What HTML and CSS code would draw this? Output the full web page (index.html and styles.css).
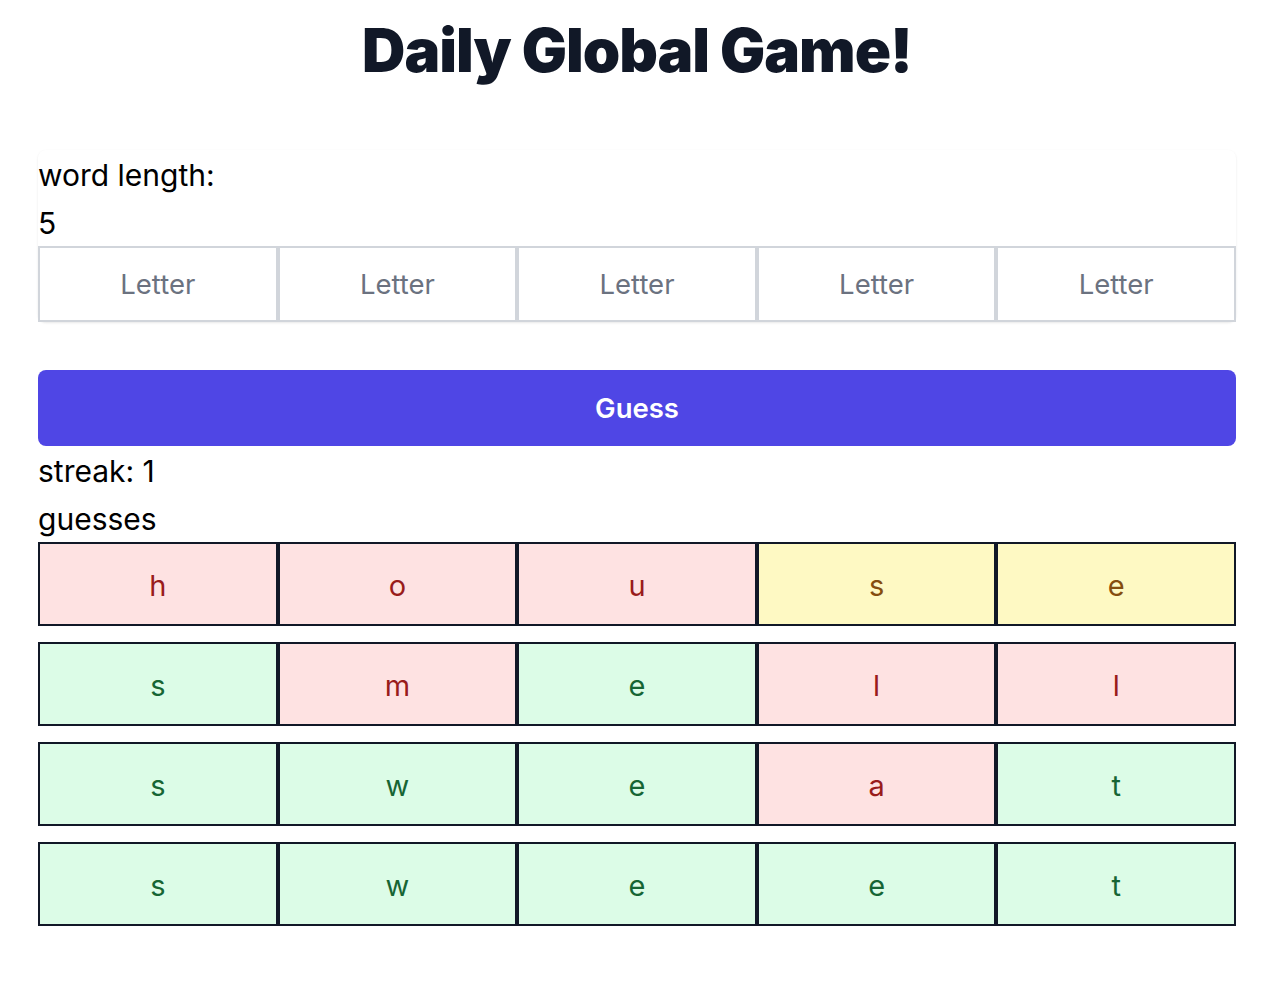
FILE: index.html
```html
<!DOCTYPE html>
<html lang="en">
<head>
<meta charset="utf-8">
<title>Daily Global Game!</title>
<link rel="stylesheet" href="styles.css">
</head>
<body>
<main class="page">
  <h1 class="title">Daily Global Game!</h1>
  <section class="card">
    <div class="line">word length:</div>
    <div class="line">5</div>
    <div class="letters">
      <input class="letter" type="text" placeholder="Letter">
      <input class="letter" type="text" placeholder="Letter">
      <input class="letter" type="text" placeholder="Letter">
      <input class="letter" type="text" placeholder="Letter">
      <input class="letter" type="text" placeholder="Letter">
    </div>
  </section>
  <button class="guess-btn" type="button">Guess</button>
  <div class="line">streak: 1</div>
  <div class="line">guesses</div>
  <div class="guesses">
    <div class="row">
      <div class="tile miss">h</div>
      <div class="tile miss">o</div>
      <div class="tile miss">u</div>
      <div class="tile near">s</div>
      <div class="tile near">e</div>
    </div>
    <div class="row">
      <div class="tile hit">s</div>
      <div class="tile miss">m</div>
      <div class="tile hit">e</div>
      <div class="tile miss">l</div>
      <div class="tile miss">l</div>
    </div>
    <div class="row">
      <div class="tile hit">s</div>
      <div class="tile hit">w</div>
      <div class="tile hit">e</div>
      <div class="tile miss">a</div>
      <div class="tile hit">t</div>
    </div>
    <div class="row">
      <div class="tile hit">s</div>
      <div class="tile hit">w</div>
      <div class="tile hit">e</div>
      <div class="tile hit">e</div>
      <div class="tile hit">t</div>
    </div>
  </div>
</main>
</body>
</html>
```

FILE: styles.css
```css
* { box-sizing: border-box; }

html, body {
  margin: 0;
  padding: 0;
  background: #ffffff;
}

body {
  font-family: Inter, "Noto Sans", "Liberation Sans", sans-serif;
  color: #000000;
}

.page {
  width: 1198px;
  margin-left: 38px;
  padding-top: 20px;
}

.title {
  margin: 0 0 70px 0;
  font-size: 60px;
  line-height: 60px;
  font-weight: 900;
  color: #111827;
  text-align: center;
  letter-spacing: -1px;
}

.card {
  background: #ffffff;
  border-radius: 8px;
  box-shadow: 0 1px 3px rgba(0, 0, 0, 0.06), 0 1px 2px rgba(0, 0, 0, 0.04);
  margin-bottom: 48px;
}

.line {
  font-size: 30px;
  line-height: 46px;
  padding-top: 2px;
  height: 48px;
}

.letters {
  display: grid;
  grid-template-columns: repeat(5, 1fr);
}

.letter {
  display: block;
  width: 100%;
  height: 76px;
  margin: 0;
  border: 2px solid #d1d5db;
  background: #ffffff;
  font-family: Inter, "Noto Sans", "Liberation Sans", sans-serif;
  font-size: 27.5px;
  text-align: center;
  color: #111827;
  outline: none;
  padding: 0;
}

.letter::placeholder {
  color: #6b7280;
  opacity: 1;
}

.guess-btn {
  display: block;
  width: 100%;
  height: 76px;
  border: 0;
  border-radius: 8px;
  background: #4f46e5;
  color: #ffffff;
  font-family: Inter, "Noto Sans", "Liberation Sans", sans-serif;
  font-size: 27.5px;
  font-weight: 600;
  padding: 0;
  cursor: pointer;
}

.guesses {
  display: flex;
  flex-direction: column;
  gap: 16px;
}

.row {
  display: grid;
  grid-template-columns: repeat(5, 1fr);
}

.tile {
  height: 84px;
  border: 2px solid #111827;
  display: flex;
  align-items: center;
  justify-content: center;
  padding-top: 3px;
  font-size: 29px;
}

.miss { background: #fee2e2; color: #991b1b; }
.near { background: #fef9c3; color: #854d0e; }
.hit  { background: #dcfce7; color: #166534; }
```
